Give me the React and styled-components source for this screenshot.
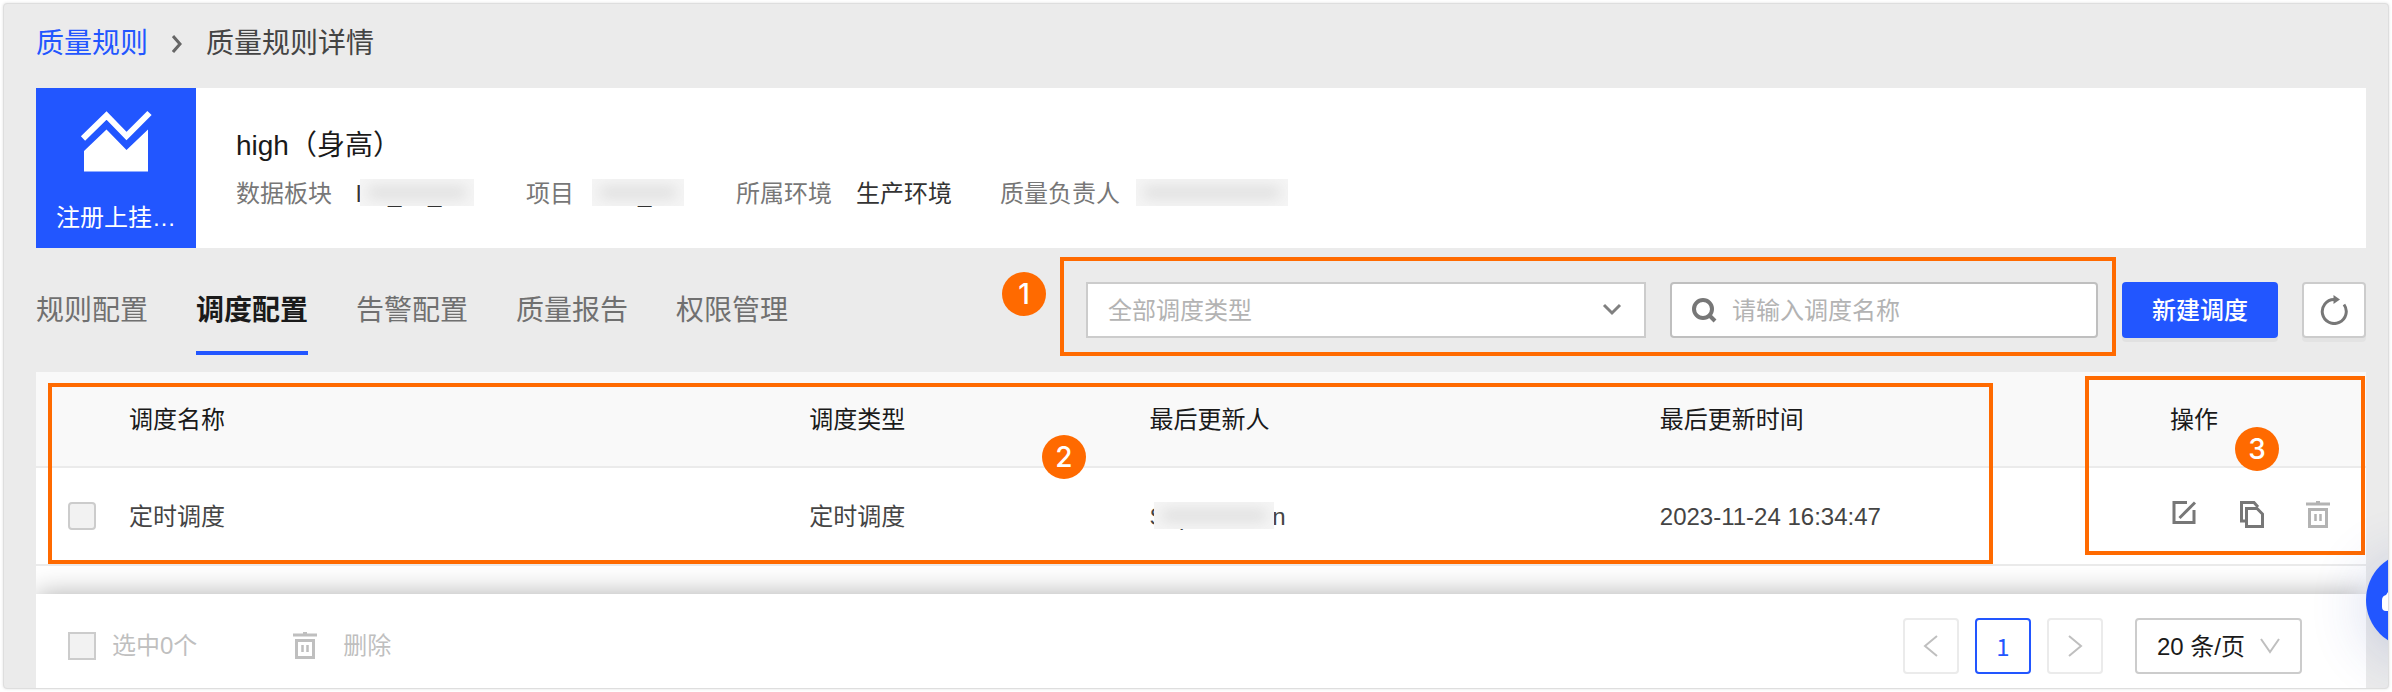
import React, { useState } from "react";
import styled, { createGlobalStyle } from "styled-components";

const GlobalStyle = createGlobalStyle`
  * {
    box-sizing: border-box;
  }

  body {
    margin: 0;
    background: #fff;
    color: #1a1a1a;
    font-family: "Liberation Sans", "Noto Sans CJK SC", sans-serif;
    font-size: 24px;
    line-height: 36px;
  }

  button,
  input,
  select {
    margin: 0;
    font: inherit;
  }
`;

const Frame = styled.div`
  position: relative;
  margin: 3px;
  padding: 0 22px 0 32px;
  border: 1px solid #dedede;
  border-radius: 4px;
  background: #ebebeb;
  box-shadow: 0 0 3px rgba(0, 0, 0, 0.12);
  overflow: hidden;
`;

const Breadcrumb = styled.nav`
  display: flex;
  align-items: center;
  gap: 24px;
  padding: 22px 0 26px;
  font-size: 28px;
  color: #444;

  a {
    color: #2256ff;
    text-decoration: none;
  }
`;

const Summary = styled.section`
  display: flex;
  background: #fff;
`;

const RuleType = styled.div`
  display: flex;
  flex-direction: column;
  align-items: center;
  justify-content: space-between;
  width: 160px;
  height: 160px;
  padding: 20px 0 12px;
  background: #2256ff;
  color: #fff;
`;

const SummaryBody = styled.div`
  flex: 1;
  padding: 40px 40px 0;
`;

const Title = styled.h1`
  margin: 0 0 12px;
  font-size: 28px;
  font-weight: 400;
  line-height: 36px;
`;

const MetaList = styled.dl`
  display: flex;
  gap: 48px;
  margin: 0;
`;

const MetaItem = styled.div`
  display: flex;
  gap: 24px;

  dt {
    color: #777;
  }

  dd {
    margin: 0;
    color: #333;
  }
`;

const Masked = styled.span`
  position: relative;
  display: block;
  width: ${(p) => p.$width}px;
  height: 36px;
  white-space: pre;

  &::after {
    content: "";
    position: absolute;
    top: 3px;
    right: 4px;
    bottom: 6px;
    left: ${(p) => p.$from}px;
    background: #dcdcdc;
    box-shadow: inset 0 0 14px 8px #f5f5f5;
  }
`;

const Toolbar = styled.div`
  display: flex;
  align-items: center;
  justify-content: space-between;
  height: 124px;
`;

const Tabs = styled.div`
  display: flex;
  gap: 48px;
`;

const Tab = styled.button`
  height: 90px;
  padding: 2px 0 0;
  border: 0;
  border-top: 4px solid transparent;
  border-bottom: 4px solid ${(p) => (p.$active ? "#2256ff" : "transparent")};
  background: none;
  color: ${(p) => (p.$active ? "#1a1a1a" : "#707070")};
  font-size: 28px;
  font-weight: ${(p) => (p.$active ? 700 : 400)};
`;

const Controls = styled.div`
  display: flex;
  gap: 24px;
`;

const Filters = styled.div`
  position: relative;
  display: flex;
  gap: 24px;
`;

const SelectBox = styled.label`
  position: relative;
  display: flex;
  align-items: center;

  select {
    width: ${(p) => p.$width}px;
    height: 56px;
    padding: 2px 20px 0;
    border: 2px solid #ccc;
    border-radius: ${(p) => p.$radius || 0}px;
    background: #fff;
    color: ${(p) => p.$color};
    appearance: none;
  }

  svg {
    position: absolute;
    right: 22px;
    pointer-events: none;
  }
`;

const SearchBox = styled.label`
  display: flex;
  align-items: center;
  gap: 14px;
  width: 428px;
  height: 56px;
  padding: 0 20px;
  border: 2px solid #bfbfbf;
  border-radius: 4px;
  background: #fff;

  input {
    flex: 1;
    min-width: 0;
    padding: 2px 0 0;
    border: 0;
    outline: 0;
    background: none;
  }

  input::placeholder {
    color: #b3b3b3;
  }
`;

const PrimaryButton = styled.button`
  width: 156px;
  height: 56px;
  padding: 2px 0 0;
  border: 0;
  border-radius: 4px;
  background: #2256ff;
  color: #fff;
  font-weight: 500;
  box-shadow: 0 4px 0 rgba(0, 0, 0, 0.04);
`;

const RefreshButton = styled.button`
  display: flex;
  align-items: center;
  justify-content: center;
  width: 64px;
  height: 56px;
  padding: 0;
  border: 2px solid #ccc;
  border-radius: 4px;
  background: #fff;
  box-shadow: 0 4px 0 rgba(0, 0, 0, 0.03);
`;

const Panel = styled.section`
  position: relative;
  background: #fff;
  overflow: hidden;
`;

const Table = styled.table`
  width: 100%;
  border-collapse: separate;
  border-spacing: 0;
  table-layout: fixed;
  text-align: left;

  th,
  td {
    padding: 2px 0 0;
    border-bottom: 2px solid #ebebeb;
  }

  th {
    height: 96px;
    background: #f9f9f9;
    font-weight: 400;
  }

  td {
    height: 98px;
    color: #444;
  }
`;

const Col = styled.col`
  width: ${(p) => p.$width};
`;

const Checkbox = styled.input`
  display: block;
  flex: none;
  width: 28px;
  height: 28px;
  border: 2px solid #ccc;
  border-radius: ${(p) => p.$radius || 0}px;
  background: #f2f2f2;
  appearance: none;
`;

const CheckCell = styled.td`
  && {
    padding: 0 0 0 32px;
  }
`;

const Actions = styled.div`
  display: flex;
  gap: 40px;
  padding-bottom: 4px;
`;

const IconButton = styled.button`
  display: flex;
  padding: 0;
  border: 0;
  background: none;
  color: ${(p) => (p.disabled ? "#b3b3b3" : "#777")};
`;

const Footer = styled.footer`
  position: relative;
  display: flex;
  align-items: center;
  justify-content: space-between;
  height: 94px;
  margin-top: 28px;
  padding: 10px 64px 0 32px;
  background: #fff;
  box-shadow: 0 0 26px rgba(0, 0, 0, 0.32);
`;

const Batch = styled.div`
  display: flex;
  align-items: center;
  gap: 96px;
  color: #bfbfbf;

  label {
    display: flex;
    align-items: center;
    gap: 16px;
  }
`;

const DeleteButton = styled.button`
  display: flex;
  align-items: center;
  gap: 22px;
  padding: 0;
  border: 0;
  background: none;
  color: #bfbfbf;
`;

const Pager = styled.div`
  display: flex;
  gap: 16px;
`;

const PageButton = styled.button`
  display: flex;
  align-items: center;
  justify-content: center;
  width: 56px;
  height: 56px;
  padding: 0;
  border: 2px solid ${(p) => (p.$active ? "#2256ff" : "#ebebeb")};
  border-radius: 4px;
  background: #fff;
  color: ${(p) => (p.$active ? "#2256ff" : "#bfbfbf")};
  font-family: "Noto Sans CJK SC", sans-serif;
`;

const PageSize = styled.div`
  margin-left: 16px;
`;

const Marker = styled.div`
  position: absolute;
  top: ${(p) => p.$top};
  right: ${(p) => p.$right};
  bottom: ${(p) => p.$bottom};
  left: ${(p) => p.$left};
  border: 4px solid #ff6a00;
  pointer-events: none;
`;

const MarkerBadge = styled.span`
  position: absolute;
  top: ${(p) => p.$top};
  left: ${(p) => p.$left};
  width: 44px;
  height: 44px;
  border-radius: 50%;
  background: #ff6a00;
  color: #fff;
  font-family: Inter, sans-serif;
  font-size: 28px;
  font-weight: 500;
  line-height: 44px;
  text-align: center;
`;

const HelpButton = styled.button`
  position: absolute;
  right: -74px;
  bottom: 40px;
  display: flex;
  align-items: center;
  width: 96px;
  height: 96px;
  padding: 0 0 0 16px;
  border: 0;
  border-radius: 50%;
  background: #2256ff;
  box-shadow: 0 8px 60px rgba(34, 60, 160, 0.2);
`;

const TABS = ["规则配置", "调度配置", "告警配置", "质量报告", "权限管理"];

const Chevron = ({ points, width, height, color, stroke = 2 }) => (
  <svg width={width} height={height} fill="none" stroke={color} strokeWidth={stroke}>
    <polyline points={points} />
  </svg>
);

const ChartIcon = () => (
  <svg width="76" height="66" viewBox="0 0 76 66" fill="#fff">
    <path d="M6 63.5V43L28.5 21.5L48.5 42L70 21.5V63.5Z" />
    <path d="M5 30.5L28.5 7.5L48.5 28L71.5 5" fill="none" stroke="#fff" strokeWidth="6" />
  </svg>
);

const SearchIcon = () => (
  <svg width="26" height="26" fill="none" stroke="#777" strokeWidth="4">
    <circle cx="11" cy="12" r="9" />
    <path d="M17 18L23 24" />
  </svg>
);

const RefreshIcon = () => (
  <svg width="28" height="30" fill="none" stroke="#777" strokeWidth="3">
    <path d="M24 9.5A12 12 0 1 1 14 4.5" />
    <path d="M13.5 0L20 4.5L13.5 9Z" fill="#777" stroke="none" />
  </svg>
);

const EditIcon = () => (
  <svg width="28" height="28" fill="none" stroke="currentColor" strokeWidth="3">
    <path d="M17 1.5H4V21.5H24V9" />
    <path d="M9.5 17L25 1.5" />
  </svg>
);

const CopyIcon = () => (
  <svg width="28" height="28" fill="none" stroke="currentColor" strokeWidth="3">
    <path d="M8 20H3.5V1.5H16L20 6" />
    <path d="M8.5 7.5H19L24.5 13V25.5H8.5Z" />
  </svg>
);

const TrashIcon = () => (
  <svg width="28" height="28" fill="none" stroke="currentColor" strokeWidth="3">
    <path d="M0 3H24M10 1H14" />
    <path d="M3.5 8.5H20.5V25.5H3.5Z" />
    <path d="M9.5 13V20M14.5 13V20" strokeWidth="2.5" />
  </svg>
);

const App = () => {
  const [tab, setTab] = useState("调度配置");
  const [keyword, setKeyword] = useState("");

  return (
    <>
      <GlobalStyle />
      <Frame>
        <Breadcrumb>
          <a href="#rules">质量规则</a>
          <Chevron width={10} height={20} points="1,2 8,10 1,18" color="#666" stroke={3} />
          <span>质量规则详情</span>
        </Breadcrumb>

        <Summary>
          <RuleType>
            <ChartIcon />
            <span>注册上挂…</span>
          </RuleType>
          <SummaryBody>
            <Title>high（身高）</Title>
            <MetaList>
              <MetaItem>
                <dt>数据板块</dt>
                <dd><Masked $width={122} $from={4}>l    _    _</Masked></dd>
              </MetaItem>
              <MetaItem>
                <dt>项目</dt>
                <dd><Masked $width={90} $from={-6}>{"      _"}</Masked></dd>
              </MetaItem>
              <MetaItem>
                <dt>所属环境</dt>
                <dd>生产环境</dd>
              </MetaItem>
              <MetaItem>
                <dt>质量负责人</dt>
                <dd><Masked $width={148} $from={-8} /></dd>
              </MetaItem>
            </MetaList>
          </SummaryBody>
        </Summary>

        <Toolbar>
          <Tabs role="tablist">
            {TABS.map((name) => (
              <Tab key={name} role="tab" aria-selected={name === tab} $active={name === tab} onClick={() => setTab(name)}>
                {name}
              </Tab>
            ))}
          </Tabs>
          <Controls>
            <Filters>
              <SelectBox $width={560} $color="#b3b3b3">
                <select aria-label="调度类型">
                  <option>全部调度类型</option>
                </select>
                <Chevron width={24} height={14} points="4,2 12,10 20,2" color="#808080" stroke={3} />
              </SelectBox>
              <SearchBox>
                <SearchIcon />
                <input
                  aria-label="调度名称"
                  placeholder="请输入调度名称"
                  value={keyword}
                  onChange={(e) => setKeyword(e.target.value)}
                />
              </SearchBox>
              <Marker $top="-25px" $right="-18px" $bottom="-18px" $left="-26px">
                <MarkerBadge $top="11px" $left="-62px">1</MarkerBadge>
              </Marker>
            </Filters>
            <PrimaryButton>新建调度</PrimaryButton>
            <RefreshButton aria-label="刷新">
              <RefreshIcon />
            </RefreshButton>
          </Controls>
        </Toolbar>

        <Panel>
          <Table>
            <colgroup>
              <Col $width="93px" />
              <Col $width="29.2%" />
              <Col $width="14.6%" />
              <Col $width="21.9%" />
              <Col $width="21.9%" />
              <Col />
            </colgroup>
            <thead>
              <tr>
                <th aria-label="选择" />
                <th>调度名称</th>
                <th>调度类型</th>
                <th>最后更新人</th>
                <th>最后更新时间</th>
                <th>操作</th>
              </tr>
            </thead>
            <tbody>
              <tr>
                <CheckCell>
                  <Checkbox type="checkbox" $radius={4} aria-label="选择定时调度" />
                </CheckCell>
                <td>定时调度</td>
                <td>定时调度</td>
                <td><Masked $width={128} $from={4}>Sup            n</Masked></td>
                <td>2023-11-24 16:34:47</td>
                <td>
                  <Actions>
                    <IconButton aria-label="编辑"><EditIcon /></IconButton>
                    <IconButton aria-label="复制"><CopyIcon /></IconButton>
                    <IconButton aria-label="删除" disabled><TrashIcon /></IconButton>
                  </Actions>
                </td>
              </tr>
            </tbody>
          </Table>
          <Footer>
            <Batch>
              <label>
                <Checkbox type="checkbox" />
                选中0个
              </label>
              <DeleteButton disabled>
                <TrashIcon />
                删除
              </DeleteButton>
            </Batch>
            <Pager>
              <PageButton aria-label="上一页" disabled>
                <Chevron width={16} height={22} points="14,1 2,11 14,21" color="#bfbfbf" />
              </PageButton>
              <PageButton $active>1</PageButton>
              <PageButton aria-label="下一页" disabled>
                <Chevron width={16} height={22} points="2,1 14,11 2,21" color="#bfbfbf" />
              </PageButton>
              <PageSize>
                <SelectBox $width={167} $radius={4} $color="#1a1a1a">
                  <select aria-label="每页条数">
                    <option>20 条/页</option>
                  </select>
                  <Chevron width={20} height={16} points="1,1 10,14 19,1" color="#bfbfbf" />
                </SelectBox>
              </PageSize>
            </Pager>
          </Footer>
          <Marker $top="11px" $right="373px" $bottom="124px" $left="12px">
            <MarkerBadge $top="48px" $left="51.1%">2</MarkerBadge>
          </Marker>
          <Marker $top="4px" $right="1px" $bottom="133px" $left="calc(100% - 281px)">
            <MarkerBadge $top="47px" $left="146px">3</MarkerBadge>
          </Marker>
        </Panel>

        <HelpButton aria-label="帮助">
          <svg width="30" height="30" fill="#fff">
            <path d="M8 4H30V30H8V26H4Q0 26 0 22V15Q0 11 4 10Z" />
          </svg>
        </HelpButton>
      </Frame>
    </>
  );
};

export default App;
